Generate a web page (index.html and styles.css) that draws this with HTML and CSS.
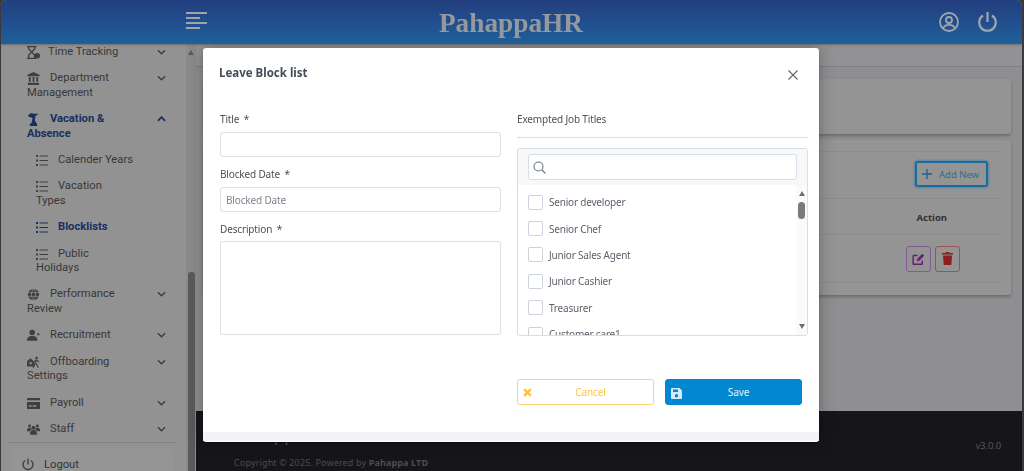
FILE: index.html
```html
<!DOCTYPE html>
<html lang="en">
<head>
<meta charset="utf-8">
<title>PahappaHR</title>
<link rel="stylesheet" href="styles.css">
</head>
<body>
<div class="app">
  <header class="topbar">
    <svg class="burger" width="21" height="18" viewBox="0 0 21 18"><path d="M0 1h21M0 6h14M0 11h21M0 16h14" stroke="#9ea5ad" stroke-width="2" fill="none"/></svg>
    <div class="brand">PahappaHR</div>
    <div class="top-icons">
      <svg width="20" height="20" viewBox="0 0 20 20" fill="none" stroke="#a0a6ae" stroke-width="1.800"><circle cx="10" cy="10" r="9"/><circle cx="10" cy="8" r="3"/><path d="M4 16.500c1-2.800 3.200-3.700 6-3.700s5 .9 6 3.700"/></svg>
      <svg width="19" height="20" viewBox="0 0 19 20" fill="none" stroke="#a0a6ae" stroke-width="2.200"><path d="M5 3.500a8.300 8.300 0 1 0 9 0M9.500 0v10"/></svg>
    </div>
  </header>
  <div class="shell">
    <aside class="sidebar">
      <div class="side-main">
        <nav class="nav">
          <a class="item tight"><svg class="chev" viewBox="0 0 10 6"><path d="M1 1l4 4 4-4"/></svg><svg class="ico" viewBox="0 0 14 14"><path d="M0 0h10v1.400H9v1.800L6 6.500l3 3.300v2.800h1V14H0v-1.400h1V9.800l3-3.300-3-3.300V1.400H0zM2.500 1.400v1.200L5 5.400l2.500-2.800V1.400zM2.500 10.300v2.300h5v-2.300L5 7.600z" fill="#3f3f3f" fill-rule="evenodd"/><circle cx="11" cy="10.500" r="3" fill="#3f3f3f"/></svg>Time Tracking</a>
          <a class="item"><svg class="chev" viewBox="0 0 10 6"><path d="M1 1l4 4 4-4"/></svg><svg class="ico" viewBox="0 0 14 14"><path d="M7 0l6.500 3v1.500h-13V3zM2 5.500h2v5H2zM6 5.500h2v5H6zM10 5.500h2v5h-2zM1 11.500h12V14H1z" fill="#3f3f3f"/></svg>Department<br>Management</a>
          <a class="item active"><svg class="chev" viewBox="0 0 10 6"><path d="M1 5l4-4 4 4"/></svg><svg class="ico" viewBox="0 0 14 14"><path d="M1 3.500c1-3 3-3.500 5-3 2 .5 4 .5 6.500 0L9 3.500l-.5 4.500L11 12v2H3v-2l2-1.500 1-5z" fill="#17305f"/></svg>Vacation &amp;<br>Absence</a>
          <a class="item sub"><svg class="ico list" viewBox="0 0 12 11"><path d="M0 0h2v2H0zM0 4.500h2v2H0zM0 9h2v2H0zM3.500.5H12v1H3.500zM3.500 5H12v1H3.500zM3.500 9.500H12v1H3.500z" fill="#3f3f3f"/></svg>Calender Years</a>
          <a class="item sub"><svg class="ico list" viewBox="0 0 12 11"><path d="M0 0h2v2H0zM0 4.500h2v2H0zM0 9h2v2H0zM3.500.5H12v1H3.500zM3.500 5H12v1H3.500zM3.500 9.500H12v1H3.500z" fill="#3f3f3f"/></svg>Vacation<br>Types</a>
          <a class="item sub active"><svg class="ico list" viewBox="0 0 12 11"><path d="M0 0h2v2H0zM0 4.500h2v2H0zM0 9h2v2H0zM3.500.5H12v1H3.500zM3.500 5H12v1H3.500zM3.500 9.500H12v1H3.500z" fill="#17305f"/></svg>Blocklists</a>
          <a class="item sub"><svg class="ico list" viewBox="0 0 12 11"><path d="M0 0h2v2H0zM0 4.500h2v2H0zM0 9h2v2H0zM3.500.5H12v1H3.500zM3.500 5H12v1H3.500zM3.500 9.500H12v1H3.500z" fill="#3f3f3f"/></svg>Public<br>Holidays</a>
          <a class="item"><svg class="chev" viewBox="0 0 10 6"><path d="M1 1l4 4 4-4"/></svg><svg class="ico" viewBox="0 0 14 14"><circle cx="7" cy="7" r="6" fill="#3f3f3f"/><path d="M1 5h12M1 9h12M7 1c-3 3.500-3 8.500 0 12M7 1c3 3.500 3 8.500 0 12" stroke="#929292" stroke-width=".8" fill="none"/></svg>Performance<br>Review</a>
          <a class="item"><svg class="chev" viewBox="0 0 10 6"><path d="M1 1l4 4 4-4"/></svg><svg class="ico" viewBox="0 0 15 14"><circle cx="6" cy="3.500" r="3.200" fill="#3f3f3f"/><path d="M0 13c0-4 2-5.500 6-5.500s6 1.500 6 5.500z" fill="#3f3f3f"/><path d="M13 4v3M11.500 5.500h3" stroke="#3f3f3f"/></svg>Recruitment</a>
          <a class="item"><svg class="chev" viewBox="0 0 10 6"><path d="M1 1l4 4 4-4"/></svg><svg class="ico" viewBox="0 0 15 14"><path d="M4 2l4.500 4v5.500H0V5.500z" fill="#3f3f3f"/><rect x="3" y="6.500" width="2.500" height="2.500" fill="#929292"/><circle cx="11" cy="1.800" r="1.500" fill="#3f3f3f"/><path d="M11 4l-1.500 4L7 13M10.500 8l2.500 5M8 6l3-2 3 2.500" stroke="#3f3f3f" stroke-width="1.300" fill="none"/></svg>Offboarding<br>Settings</a>
          <a class="item"><svg class="chev" viewBox="0 0 10 6"><path d="M1 1l4 4 4-4"/></svg><svg class="ico" viewBox="0 0 14 12"><path d="M1 0h12a1 1 0 0 1 1 1v1.500H0V1a1 1 0 0 1 1-1zM0 4.500h14V11a1 1 0 0 1-1 1H1a1 1 0 0 1-1-1zM2 8v1.500h3V8zM6 8v1.500h4V8z" fill="#3f3f3f" fill-rule="evenodd"/></svg>Payroll</a>
          <a class="item"><svg class="chev" viewBox="0 0 10 6"><path d="M1 1l4 4 4-4"/></svg><svg class="ico" viewBox="0 0 15 12"><circle cx="3" cy="2" r="1.700" fill="#3f3f3f"/><circle cx="12" cy="2" r="1.700" fill="#3f3f3f"/><circle cx="7.500" cy="4" r="2.200" fill="#3f3f3f"/><path d="M0 7c0-2 1-3 3-3s2.500 1 2.500 2L3 8H0zM15 7c0-2-1-3-3-3s-2.500 1-2.500 2L12 8h3zM3.500 12c0-4 1-5.500 4-5.500s4 1.500 4 5.500z" fill="#3f3f3f"/></svg>Staff</a>
        </nav>
        <div class="side-rule"></div>
        <div class="logout">
          <svg width="12" height="13" viewBox="0 0 12 13" fill="none" stroke="#3f3f3f" stroke-width="1.400"><path d="M3 2.500a5 5 0 1 0 6 0M6 .5v6"/></svg>
          <span>Logout</span>
        </div>
      </div>
      <div class="side-scroll">
        <span class="arrow-up"></span>
        <span class="side-thumb"></span>
      </div>
    </aside>
    <main class="main">
      <div class="crumbs"></div>
      <div class="content">
        <section class="card card-top"></section>
        <section class="card card-table">
          <div class="tools">
            <button class="add-btn"><svg width="10" height="10" viewBox="0 0 10 10"><path d="M5 0v10M0 5h10" stroke="#17608f" stroke-width="1.300"/></svg>Add New</button>
          </div>
          <div class="thead"><span class="th-action">Action</span></div>
          <div class="trow">
            <button class="act act-edit"><svg width="13" height="12" viewBox="0 0 14 13" fill="none" stroke="#651c7a" stroke-width="1.600"><path d="M11 8v3.500a.8.800 0 0 1-.8.800H2a.8.800 0 0 1-.8-.8V3.500a.8.800 0 0 1 .8-.8h4"/><path d="M5.500 8.500l.4-2L11 1.300l1.800 1.800L7.500 8.200z" fill="#651c7a" stroke-width=".8"/></svg></button>
            <button class="act act-del"><svg width="11" height="13" viewBox="0 0 11 13" fill="#8f1d1d"><path d="M4 0h3l.5 1H11v1.500H0V1h3.500zM1 3.500h9L9.300 13H1.700z"/></svg></button>
          </div>
        </section>
      </div>
      <footer class="footer">
        <div class="foot-left">
          <div class="foot-logo">Pahappa</div>
          <div class="copy">Copyright © 2025. Powered by <b>Pahappa LTD</b></div>
        </div>
        <div class="version">v3.0.0</div>
      </footer>
    </main>
  </div>
</div>

<div class="modal">
  <div class="modal-head">
    <h2>Leave Block list</h2>
    <svg class="close" width="10" height="10" viewBox="0 0 10 10"><path d="M.5.500l9 9M9.500.500l-9 9" stroke="#5c6670" stroke-width="1.100"/></svg>
  </div>
  <div class="modal-body">
    <div class="col-left">
      <label class="lbl">Title <i>*</i></label>
      <div class="input"></div>
      <label class="lbl lbl-next">Blocked Date <i>*</i></label>
      <div class="input ph">Blocked Date</div>
      <label class="lbl lbl-next lbl-desc">Description <i>*</i></label>
      <div class="input area"></div>
    </div>
    <div class="col-right">
      <label class="lbl">Exempted Job Titles</label>
      <hr class="rule">
      <div class="picker">
        <div class="picker-search">
          <div class="search-box"><svg width="13" height="13" viewBox="0 0 13 13" fill="none" stroke="#6b7280" stroke-width="1.100"><circle cx="5.500" cy="5.500" r="4.500"/><path d="M9 9l3.500 3.500"/></svg></div>
        </div>
        <div class="picker-body">
          <ul class="options">
            <li><span class="check"></span>Senior developer</li>
            <li><span class="check"></span>Senior Chef</li>
            <li><span class="check"></span>Junior Sales Agent</li>
            <li><span class="check"></span>Junior Cashier</li>
            <li><span class="check"></span>Treasurer</li>
            <li><span class="check"></span>Customer care1</li>
          </ul>
          <div class="mini-scroll">
            <span class="mini-up"></span>
            <span class="mini-thumb"></span>
            <span class="mini-down"></span>
          </div>
        </div>
      </div>
    </div>
  </div>
  <div class="modal-foot">
    <button class="btn btn-cancel"><svg width="9" height="9" viewBox="0 0 9 9"><path d="M1.200 1.200l6.600 6.600M7.800 1.200L1.200 7.800" stroke="#ffc13c" stroke-width="2.400"/></svg>Cancel</button>
    <button class="btn btn-save"><svg width="11" height="11" viewBox="0 0 11 11"><path d="M1 0h7.500L11 2.500V10a1 1 0 0 1-1 1H1a1 1 0 0 1-1-1V1a1 1 0 0 1 1-1zM2 1.500V4h5V1.500zM5.500 6a1.700 1.700 0 1 0 0 3.400 1.700 1.700 0 0 0 0-3.400z" fill="#d7e9f6" fill-rule="evenodd"/></svg>Save</button>
  </div>
  <div class="modal-strip"></div>
</div>
</body>
</html>
```

FILE: styles.css
```css
* { box-sizing: border-box; }
html, body { margin: 0; height: 100%; overflow: hidden; background: #3a3a3c; }
body { padding-left: 1px; padding-right: 2px; font-family: "Noto Sans", sans-serif; }
.app { height: 471px; display: flex; flex-direction: column; border-radius: 6px 6px 0 0; overflow: hidden; background: #909093; }
button { font: inherit; padding: 0; cursor: pointer; }

.topbar { height: 44px; flex: none; position: relative; z-index: 2; display: flex; align-items: center; padding: 0 25px 0 185px; background: linear-gradient(#233e7e, #1f5f9b); box-shadow: 0 1px 2px rgba(0,0,0,.25); }
.burger { flex: none; margin-top: -3px; }
.brand { flex: 1; text-align: center; padding-right: 124px; font: bold 27.300px "Liberation Serif", serif; color: #94999e; margin-top: 2px; }
.top-icons { display: flex; align-items: center; gap: 19px; margin-top: -1px; }

.shell { flex: 1; min-height: 0; display: flex; }
.sidebar { width: 195px; flex: none; display: flex; background: #929292; box-shadow: 2px 0 3px rgba(0,0,0,.18); }
.side-main { width: 185px; flex: none; font-family: Roboto, sans-serif; color: #353535; display: flex; flex-direction: column; }
.nav { flex: none; margin-top: -5px; padding: 0 20px 0 26px; }
.item { display: block; font-size: 11.200px; line-height: 14.4px; padding: 6px 0; color: #383838; }
.item .ico { width: 13px; height: 13px; vertical-align: -2px; margin: -2px 10px -2px 0; }
.item.tight .ico { margin-right: 8px; }
.item.sub { padding-left: 9px; }
.item .list { width: 12px; height: 11px; vertical-align: -1px; margin: -2px 10px -2px 0; }
.item.active { font-weight: 700; color: #17305f; }
.chev { float: right; width: 9px; height: 6px; margin-top: 4px; fill: none; stroke: #3c3c3c; stroke-width: 1.500; }
.active > .chev { stroke: #17305f; stroke-width: 2; }
.side-rule { height: 1px; flex: none; margin: 0 9px 0 7px; background: #7f7f7f; }
.logout { margin: 6px 0 0 11px; width: 161px; height: 30px; flex: none; padding-left: 10px; display: flex; align-items: center; gap: 10px; font-size: 11.200px; color: #333; background: #959595; border-radius: 3px; }

.side-scroll { width: 10px; flex: none; display: flex; flex-direction: column; align-items: center; background: #8b8b8b; }
.arrow-up { margin-top: 6px; border: 3.500px solid transparent; border-top: 0; border-bottom: 5px solid #5a5a5a; }
.side-thumb { width: 7px; margin-top: auto; height: 199px; background: #5a5a5a; border-radius: 3px 3px 0 0; }

.main { flex: 1; min-width: 0; display: flex; flex-direction: column; background: #8f8f92; }
.crumbs { height: 23px; flex: none; border-bottom: 1px solid #7e7e88; background: #929295; }
.content { flex: 1; padding: 12px 11px 0 8px; }
.card { background: #949494; border-radius: 3px; box-shadow: 0 2px 3px rgba(0,0,0,.25); }
.card-top { height: 55px; margin-bottom: 6px; }
.card-table { height: 155px; padding: 11px 12px; }
.tools { height: 48px; border-top: 1px solid #8c8c8c; border-bottom: 1px solid #8c8c8c; display: flex; justify-content: flex-end; align-items: center; padding: 0 10px 2px; }
.add-btn { width: 73px; height: 26px; display: flex; align-items: center; gap: 7px; padding: 1px 0 0 5px; margin-right: 1px; font-size: 9.500px; color: #2a6e98; background: transparent; border: 2px solid #1a6c9e; border-radius: 3px; box-shadow: 0 0 0 1.500px rgba(50,125,175,.45); white-space: nowrap; }
.add-btn svg { margin-top: -1px; }
.thead { height: 36px; display: flex; justify-content: flex-end; align-items: center; padding: 2px 52px 0 0; border-bottom: 1px solid #8c8c8c; }
.th-action { font: bold 9.500px "Noto Sans", sans-serif; color: #2f3238; }
.trow { height: 48px; display: flex; justify-content: flex-end; align-items: center; gap: 4px; padding-right: 39px; border-bottom: 1px solid #8c8c8c; }
.act { width: 25px; height: 26px; display: flex; align-items: center; justify-content: center; background: transparent; border-radius: 3px; }
.act-edit { border: 1px solid #845a96; }
.act-del { border: 1px solid #9a5352; }

.footer { height: 60px; flex: none; background: #16151a; display: flex; justify-content: space-between; padding: 24px 21px 0 38px; }
.foot-logo { font-size: 17px; line-height: 13px; height: 13px; margin-top: -7px; margin-bottom: 7px; color: #55555a; }
.foot-left { display: flex; flex-direction: column; gap: 9px; }
.copy { font-size: 9px; line-height: 12px; color: #4c4c52; letter-spacing: .14px; }
.version { font-size: 9.500px; color: #55555b; padding-top: 4px; letter-spacing: -.1px; }

.modal { position: fixed; left: 203px; top: 48px; width: 616px; height: 394px; display: flex; flex-direction: column; background: #fff; border-radius: 3px; box-shadow: 0 0 16px rgba(0,0,0,.3), 0 1px 1px rgba(0,0,0,.5); color: #4c5560; }
.modal-head { height: 48px; flex: none; display: flex; justify-content: space-between; align-items: center; padding: 0 21px 0 16px; }
.modal-head h2 { margin: 0; font-size: 11.500px; font-weight: 700; color: #444c58; }
.close { margin-top: 5px; }
.modal-body { height: 225px; margin-top: 15px; flex: none; display: grid; grid-template-columns: 281px 291px; column-gap: 16px; padding-left: 17px; }
.col-left, .col-right { min-width: 0; display: flex; flex-direction: column; }
.lbl { display: block; height: 16px; line-height: 16px; font-size: 10px; letter-spacing: -.15px; color: #4b5259; }
.lbl i { font-style: normal; margin-left: 2px; }
.lbl-next { margin-top: 9px; }
.lbl-desc { margin-bottom: -1px; }
.input { height: 25px; margin-top: 5px; border: 1px solid #dde0e6; border-radius: 3px; background: #fff; }
.ph { display: flex; align-items: center; padding-left: 5px; font-size: 10px; letter-spacing: -.15px; color: #7d858d; }
.area { height: 94px; }
.rule { width: 100%; margin: 10px 0; border: 0; border-top: 1px solid #dadde3; height: 1px; flex: none; }
.picker { height: 188px; border: 1px solid #d9dde5; border-radius: 3px; display: flex; flex-direction: column; overflow: hidden; }
.picker-search { height: 36px; flex: none; padding: 5px 10px 0 10px; background: #f7f8fa; }
.search-box { height: 26px; border: 1px solid #d9dde5; border-radius: 3px; background: #fff; display: flex; align-items: center; padding-left: 4px; }
.picker-body { flex: 1; min-height: 0; display: flex; overflow: hidden; }
.options { list-style: none; margin: 0; padding: 4px 0 0 10px; flex: 1; min-width: 0; }
.options li { height: 26.400px; display: flex; align-items: center; gap: 6px; font-size: 10px; letter-spacing: -.2px; color: #5b636c; }
.check { width: 15px; height: 15px; flex: none; border: 1px solid #cdd2da; border-radius: 2px; background: #fff; }
.mini-scroll { width: 11px; flex: none; display: flex; flex-direction: column; align-items: center; padding: 6px 0 6px; background: #fafafa; }
.mini-up { border: 3.500px solid transparent; border-top: 0; border-bottom: 5px solid #707070; }
.mini-thumb { width: 7px; height: 17px; margin-top: 6px; background: #7a7a7a; border-radius: 3.500px; }
.mini-down { margin-top: auto; border: 3.500px solid transparent; border-bottom: 0; border-top: 5px solid #707070; }

.modal-foot { flex: none; display: grid; grid-template-columns: 137px 137px; column-gap: 11px; margin: 43px 0 0 314px; }
.btn { height: 26px; position: relative; display: flex; align-items: center; justify-content: center; padding-left: 10px; font-size: 10px; letter-spacing: -.1px; border-radius: 3px; }
.btn svg { position: absolute; left: 5px; top: 7.500px; }
.btn-cancel { background: #fff; border: 1px solid #fdd26e; color: #ffc24a; }
.btn-save { background: #0288d1; border: 1px solid #0288d1; color: #e3f1fa; }
.modal-strip { height: 9px; margin-top: 27px; flex: none; background: #f2f4f9; }
```
